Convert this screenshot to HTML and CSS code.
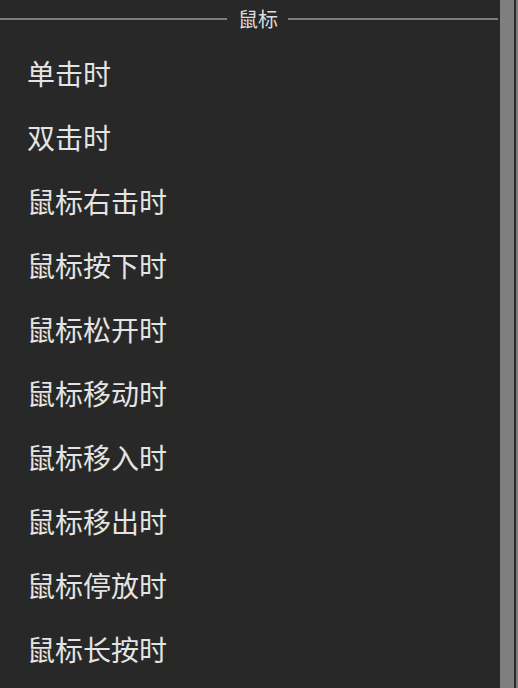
FILE: index.html
```html
<!DOCTYPE html>
<html lang="zh">
<head>
<meta charset="utf-8">
<link rel="stylesheet" href="styles.css">
</head>
<body>
<div class="panel">
  <div class="content">
    <div class="section-head">
      <span class="line line-left"></span>
      <span class="section-title">鼠标</span>
      <span class="line line-right"></span>
    </div>
    <ul class="list">
      <li class="item">单击时</li>
      <li class="item">双击时</li>
      <li class="item">鼠标右击时</li>
      <li class="item">鼠标按下时</li>
      <li class="item">鼠标松开时</li>
      <li class="item">鼠标移动时</li>
      <li class="item">鼠标移入时</li>
      <li class="item">鼠标移出时</li>
      <li class="item">鼠标停放时</li>
      <li class="item">鼠标长按时</li>
    </ul>
  </div>
  <div class="scrollbar">
    <div class="track"></div>
    <div class="gap"></div>
    <div class="edge"></div>
  </div>
</div>
</body>
</html>
```
FILE: styles.css
```css
html, body {
  margin: 0;
  padding: 0;
  background: #282828;
  width: 518px;
  height: 688px;
  overflow: hidden;
}
body {
  font-family: "Noto Sans CJK SC", "Noto Sans", sans-serif;
  color: #e4e4e4;
}
.panel {
  display: flex;
  height: 688px;
}
.content {
  width: 500px;
}
.section-head {
  display: flex;
  align-items: center;
  height: 37px;
  width: 498px;
}
.line {
  height: 2px;
  background: #7c7c7c;
}
.line-left {
  width: 227px;
}
.line-right {
  flex: 1;
}
.section-title {
  font-size: 20px;
  line-height: 37px;
  padding: 0 10px 0 11px;
  color: #dcdcdc;
}
.list {
  list-style: none;
  margin: 0;
  padding: 4px 0 0 0;
}
.item {
  height: 64px;
  line-height: 64px;
  padding-left: 27px;
  font-size: 28px;
}
.scrollbar {
  display: flex;
  width: 18px;
}
.track {
  width: 14px;
  background: #7f7f7f;
}
.gap {
  width: 2px;
  background: #2a2a2a;
}
.edge {
  width: 2px;
  background: #7f7f7f;
}
```
